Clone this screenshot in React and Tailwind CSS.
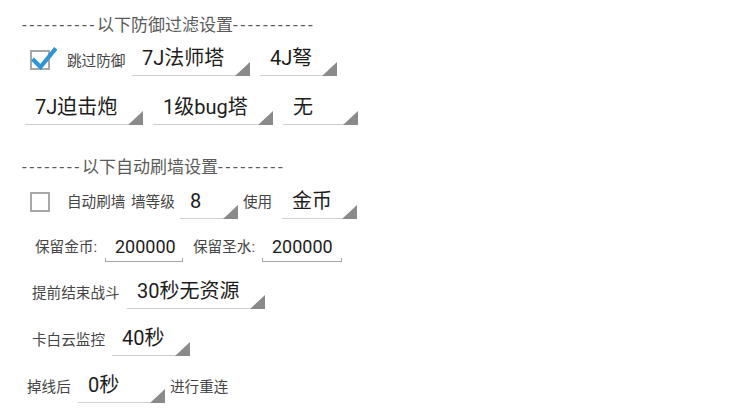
import React from "react";

const FONT = "font-['Roboto','Noto_Sans_CJK_SC',sans-serif]";

function Spinner({ w, children }) {
  return (
    <div className={`relative flex h-[36px] shrink-0 items-center border-b border-[#d0d0d0] pl-[10px] ${w}`}>
      <span className="whitespace-nowrap text-[20px] leading-none text-[#1c1c1c]">{children}</span>
      <svg className="absolute bottom-[-1px] right-0" width="15" height="14" viewBox="0 0 15 14">
        <polygon points="15,0 15,14 0,14" fill="#8a8a8a" />
      </svg>
    </div>
  );
}

function Edit({ w, children }) {
  return (
    <div className={`relative flex h-[30px] shrink-0 items-center pl-[10px] ${w}`}>
      <span className="text-[18px] leading-none text-[#1c1c1c]">{children}</span>
      <div className="absolute bottom-0 left-0 right-0 h-[4px] border-x border-b border-[#a8a8a8]" />
    </div>
  );
}

function Label({ w, className = "", children }) {
  return (
    <span className={`shrink-0 whitespace-nowrap text-[14.6px] leading-none text-[#454545] ${w} ${className}`}>
      {children}
    </span>
  );
}

function CheckBox({ checked }) {
  return (
    <div className="relative h-[20px] w-[20px] shrink-0 border-2 border-[#a8a8a8] bg-white">
      {checked && (
        <svg className="absolute left-[-1px] top-[-6px]" width="26" height="24" viewBox="0 0 26 24">
          <path d="M3 14.5 L9.5 21 L23.5 4" fill="none" stroke="#2f96d6" strokeWidth="4.2" strokeLinecap="square" />
        </svg>
      )}
    </div>
  );
}

function Header({ left, title, right }) {
  return (
    <div className="flex h-[24px] items-center pl-[22px] text-[17px] leading-none text-[#5a5a5a]">
      <span className="tracking-[2.8px]">{left}</span>
      <span>{title}</span>
      <span className="tracking-[2.8px]">{right}</span>
    </div>
  );
}

export default function App() {
  return (
    <div className={`h-[420px] w-[732px] overflow-hidden bg-white pt-[13px] ${FONT}`}>
      <Header left="----------" title="以下防御过滤设置" right="-----------" />

      <div className="mt-[3px] flex h-[36px] items-center">
        <div className="ml-[30px] mt-[4px]">
          <CheckBox checked />
        </div>
        <Label w="w-[60px]" className="ml-[17px] mt-[6px] text-[14.2px]">跳过防御</Label>
        <div className="ml-[5px]">
          <Spinner w="w-[118px]">7J法师塔</Spinner>
        </div>
        <div className="ml-[10px]">
          <Spinner w="w-[77px]">4J弩</Spinner>
        </div>
      </div>

      <div className="mt-[13px] flex h-[36px] items-center">
        <div className="ml-[25px]">
          <Spinner w="w-[118px]">7J迫击炮</Spinner>
        </div>
        <div className="ml-[10px]">
          <Spinner w="w-[120px]">1级bug塔</Spinner>
        </div>
        <div className="ml-[10px]">
          <Spinner w="w-[75px]">无</Spinner>
        </div>
      </div>

      <div className="mt-[30px]">
        <Header left="--------" title="以下自动刷墙设置" right="---------" />
      </div>

      <div className="mt-[4px] flex h-[36px] items-center">
        <div className="ml-[30px] mt-[2px]">
          <CheckBox />
        </div>
        <Label w="w-[64px]" className="ml-[17px] mt-[2px] text-[14.2px]">自动刷墙</Label>
        <Label w="w-[49px]" className="mt-[2px] text-[14.2px]">墙等级</Label>
        <Spinner w="w-[58px]">8</Spinner>
        <Label w="w-[39px]" className="ml-[5px] mt-[2px] text-[14.2px]">使用</Label>
        <Spinner w="w-[75px]">金币</Spinner>
      </div>

      <div className="mt-[13px] flex h-[30px] items-center">
        <Label w="w-[70px]" className="ml-[35px]">保留金币:</Label>
        <Edit w="w-[78px]">200000</Edit>
        <Label w="w-[69px]" className="ml-[10px]">保留圣水:</Label>
        <Edit w="w-[80px]">200000</Edit>
      </div>

      <div className="mt-[11px] flex h-[36px] items-center">
        <Label w="w-[95px]" className="ml-[32px] mt-[4px]">提前结束战斗</Label>
        <Spinner w="w-[138px]">30秒无资源</Spinner>
      </div>

      <div className="mt-[11px] flex h-[36px] items-center">
        <Label w="w-[80px]" className="ml-[32px] mt-[5px]">卡白云监控</Label>
        <Spinner w="w-[78px]">40秒</Spinner>
      </div>

      <div className="mt-[11px] flex h-[36px] items-center">
        <Label w="w-[51px]" className="ml-[27px] mt-[4px]">掉线后</Label>
        <Spinner w="w-[87px]">0秒</Spinner>
        <Label w="w-[60px]" className="ml-[5px] mt-[4px]">进行重连</Label>
      </div>
    </div>
  );
}
